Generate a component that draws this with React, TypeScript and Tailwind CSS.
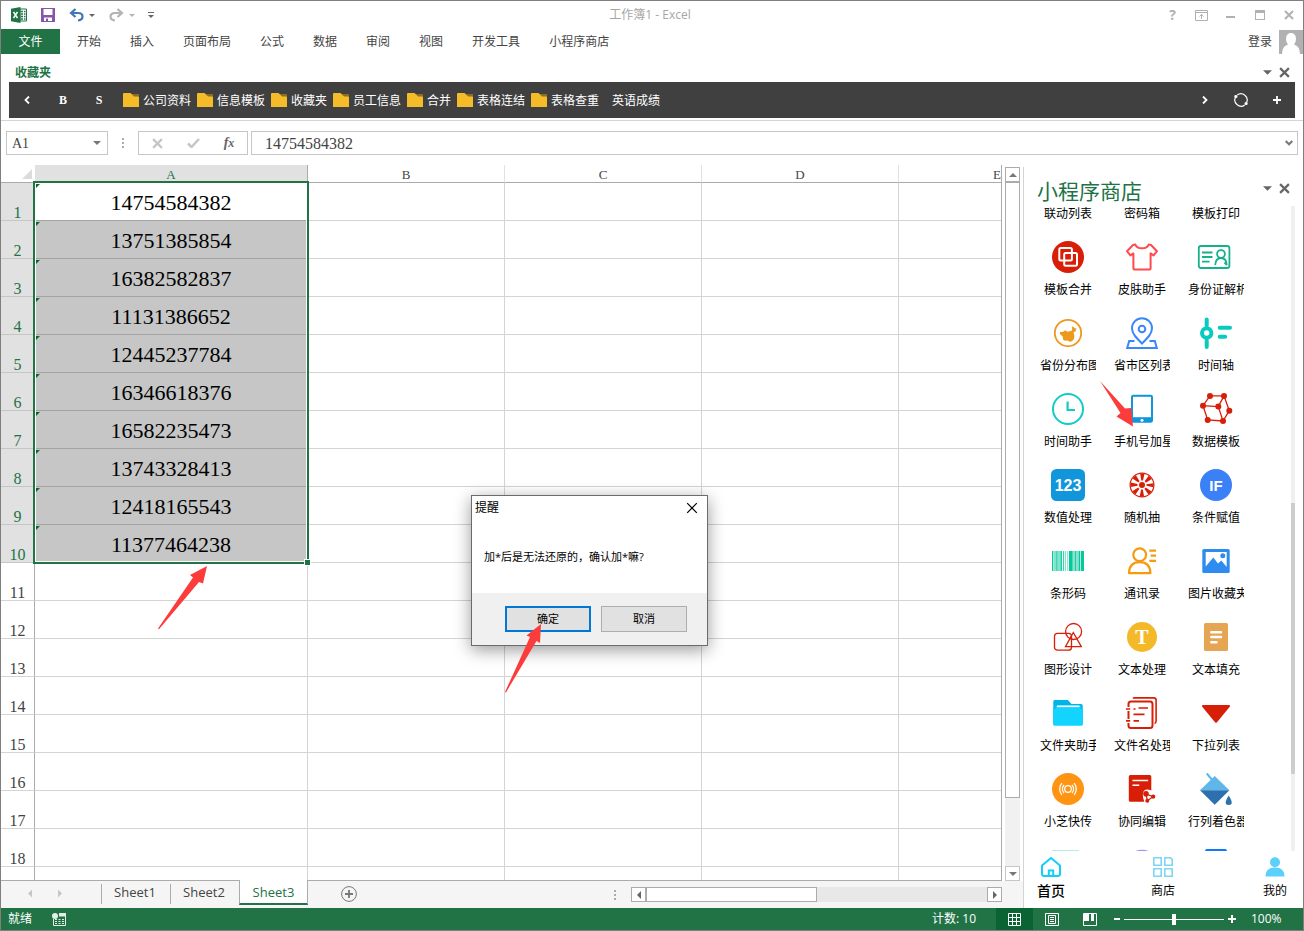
import { useState, type ReactNode } from "react";

const ribbonTabs = ["开始", "插入", "页面布局", "公式", "数据", "审阅", "视图", "开发工具", "小程序商店"];

const favorites = ["公司资料", "信息模板", "收藏夹", "员工信息", "合并", "表格连结", "表格查重"];

const phones = [
  "14754584382",
  "13751385854",
  "16382582837",
  "11131386652",
  "12445237784",
  "16346618376",
  "16582235473",
  "13743328413",
  "12418165543",
  "11377464238",
];

const rows = Array.from({ length: 18 }, (_, i) => i + 1);
const otherColumns = ["B", "C", "D", "E"];
const sheets = ["Sheet1", "Sheet2", "Sheet3"];

const apps: { name: string; icon: ReactNode }[] = [
  {
    name: "模板合并",
    icon: (
      <>
        <circle cx="16" cy="16" r="16" fill="#d81e06" />
        <g fill="none" stroke="#fff" strokeWidth="2">
          <rect x="7.3" y="7" width="12.6" height="12.6" rx="1.5" />
          <rect x="12.2" y="12" width="12.8" height="12.8" rx="1.5" />
        </g>
      </>
    ),
  },
  {
    name: "皮肤助手",
    icon: (
      <path
        d="M9.3 3.5C11 8.6 21 8.6 22.7 3.5L25 4l6 6.2-3.4 4.2-3-2V27q0 1.6-1.6 1.6H9Q7.4 28.6 7.4 27V12.4l-3 2L1 10.2 7 4z"
        fill="none"
        stroke="#ff4a4e"
        strokeWidth="2"
        strokeLinejoin="round"
      />
    ),
  },
  {
    name: "身份证解析",
    icon: (
      <g fill="none" stroke="#16b08c" strokeWidth="1.8">
        <rect x="-1.2" y="5" width="30.6" height="22" rx="2.2" />
        <path d="M2 11.5h10.5M2 16h10.5M2 20.6h7.5" />
        <circle cx="21" cy="13" r="3.9" />
        <path d="M15.2 24c.3-4.6 2.5-7 5.8-7s5.5 2.4 5.8 7M24.5 21.5l2.5 2.5" />
      </g>
    ),
  },
  {
    name: "省份分布图",
    icon: (
      <>
        <circle cx="16" cy="16" r="13.2" fill="none" stroke="#ed9a1c" strokeWidth="1.8" />
        <path
          d="M8 15l3.5-.2 1.5-1.6 2.5 1.6 4-1 .8-1.6-.6-1.8 1.3-1.2 1.5 2 2 .4-1 2.6-2 1.2.8 2.4-.1 4-2.2 2.4-2.5.6-2-1.3-2.5.3-2-1.2-.3-3L8 17z"
          fill="#ed9a1c"
        />
      </>
    ),
  },
  {
    name: "省市区列表",
    icon: (
      <g fill="none" stroke="#3a86fb" strokeWidth="2">
        <path d="M16 26.5C10 20.5 6 16.5 6 11.2a10 10 0 0 1 20 0C26 16.5 22 20.5 16 26.500z" />
        <circle cx="16" cy="12" r="3.3" />
        <path d="M8.500 24H3.200L1.200 31h29.600l-2-7h-5.300" />
      </g>
    ),
  },
  {
    name: "时间轴",
    icon: (
      <g fill="none" stroke="#08cbc0" strokeWidth="4" strokeLinecap="round">
        <path d="M6.700 2.500v6M6.700 23.500V30M19.700 10.700h10.300M19.700 19.800h5.500" />
        <circle cx="6.700" cy="16" r="4.700" />
      </g>
    ),
  },
  {
    name: "时间助手",
    icon: (
      <g fill="none" stroke="#12cbc8" strokeWidth="2">
        <circle cx="16" cy="16" r="15" />
        <path d="M15.600 8.500v8.500H23" strokeWidth="2.200" />
      </g>
    ),
  },
  {
    name: "手机号加星",
    icon: (
      <>
        <rect x="5" y="1.800" width="22" height="28" rx="2.200" fill="#1296db" />
        <path d="M7 3.800h18v20.400H7z" fill="#fff" />
        <circle cx="16" cy="27.200" r="1.500" fill="#fff" />
      </>
    ),
  },
  {
    name: "数据模板",
    icon: (
      <>
        <path
          d="M10 2.900h14M10 2.900L3 12.700l15.300.9L24 2.900l5.300 14.800L23 28l-4.700-14.400M3 12.700L7.700 27 23 28"
          fill="none"
          stroke="#d81e06"
          strokeWidth="1.300"
        />
        <g fill="#d81e06">
          <circle cx="10" cy="2.900" r="3" />
          <circle cx="24" cy="2.900" r="3" />
          <circle cx="3" cy="12.700" r="3" />
          <circle cx="18.300" cy="13.600" r="3" />
          <circle cx="29.300" cy="17.700" r="3" />
          <circle cx="7.700" cy="27" r="3" />
          <circle cx="23" cy="28" r="3" />
        </g>
      </>
    ),
  },
  {
    name: "数值处理",
    icon: (
      <>
        <rect x="-1" y="0" width="34" height="32" rx="5.500" fill="#1296db" />
        <text x="16" y="22" textAnchor="middle" fontSize="16" fontWeight="700" fill="#fff" fontFamily="Liberation Sans, sans-serif">
          123
        </text>
      </>
    ),
  },
  {
    name: "随机抽",
    icon: (
      <g fill="none" stroke="#d81e06">
        <circle cx="16" cy="16" r="11.900" strokeWidth="1.200" />
        <circle cx="16" cy="16" r="8" strokeWidth="7" strokeDasharray="3.100 3.183" strokeDashoffset="1.550" />
        <circle cx="16" cy="16" r="3" fill="#d81e06" stroke="none" />
      </g>
    ),
  },
  {
    name: "条件赋值",
    icon: (
      <>
        <circle cx="16" cy="16" r="16" fill="#3a80f6" />
        <text x="16" y="21.500" textAnchor="middle" fontSize="15" fontWeight="700" fill="#fff" fontFamily="Liberation Sans, sans-serif">
          IF
        </text>
      </>
    ),
  },
  {
    name: "条形码",
    icon: (
      <>
        <path d="M2 6h7v20H2zM13 6h1v20h-1zM15.200 6h1v20h-1zM20.500 6h6v20h-6z" fill="#85e3cb" />
        <path
          d="M0 6h1.400v20H0zM4.500 6h.7v20h-.7zM8.700 6h1.200v20H8.700zM11.200 6h.9v20h-.9zM17 6h3.600v20H17zM23 6h.8v20H23zM26.600 6H28v20h-1.400zM28.700 6H32v20h-3.300z"
          fill="#05c99c"
        />
      </>
    ),
  },
  {
    name: "通讯录",
    icon: (
      <g fill="none" stroke="#f59c0e" strokeWidth="2.200">
        <circle cx="13.700" cy="9.800" r="6.400" />
        <path d="M3 28.200c.2-7 4-11 10.700-11s10.500 4 10.700 11z" strokeLinejoin="round" />
        <path d="M23.300 5.700H30M24.700 10.700H30M23.300 15.800H30" />
      </g>
    ),
  },
  {
    name: "图片收藏夹",
    icon: (
      <>
        <rect x="2.300" y="4" width="27.400" height="24" rx="1.500" fill="#2e8cf0" />
        <path d="M5.700 7h21v15l-5.400-6.500-3.300 3-4.700-6L5.700 21.500z" fill="#fff" />
        <circle cx="22.800" cy="10.700" r="2.500" fill="#2e8cf0" />
      </>
    ),
  },
  {
    name: "图形设计",
    icon: (
      <g fill="none" stroke="#d81e06" strokeWidth="1.300">
        <circle cx="21.600" cy="10.500" r="8" />
        <rect x="2.500" y="12.400" width="17" height="16.800" rx="3" />
        <path d="M21.300 11.500l8 14.200H13.500z" />
      </g>
    ),
  },
  {
    name: "文本处理",
    icon: (
      <>
        <circle cx="16" cy="16" r="15" fill="#f3b929" />
        <text x="16" y="22.700" textAnchor="middle" fontSize="20" fontWeight="700" fill="#fff" fontFamily="Liberation Serif, serif">
          T
        </text>
      </>
    ),
  },
  {
    name: "文本填充",
    icon: (
      <>
        <rect x="4" y="2" width="24" height="28" rx="1.500" fill="#e6a552" />
        <path d="M11.300 11.200h9.700M11.300 16h9.700M11.300 21.200h5.200" stroke="#fff" strokeWidth="2.400" strokeLinecap="round" />
      </>
    ),
  },
  {
    name: "文件夹助手",
    icon: (
      <>
        <path d="M1.300 4.500Q1.300 3 2.800 3h13l3.700 4H29q1.700 0 1.700 1.700V14H1.300z" fill="#00b4e6" />
        <path d="M1 12h2.500V8.500h25.200V12H31v15q0 1.700-1.700 1.700H2.700Q1 28.700 1 27z" fill="#12d4ff" />
        <path d="M5 9.300h22.500" stroke="#fff" strokeWidth="1.600" />
      </>
    ),
  },
  {
    name: "文件名处理",
    icon: (
      <g fill="none" stroke="#d81e06" strokeWidth="2">
        <path d="M7 1.500Q7.500.9 8.500.9h19.300q2.300 0 2.300 2.300V24q0 2-1.600 2.500" strokeWidth="1.600" />
        <path d="M2.500 10V7q0-2.500 2.500-2.500h19q2.500 0 2.500 2.500v21.500q0 2.500-2.500 2.500H5q-2.500 0-2.500-2.500V26M2.500 14v8" />
        <path d="M0 12h4.200M0 23.900h4.200M12.500 11h9.500M7.500 17.300h11M7.500 23.900H13M7.500 12h2" strokeWidth="1.700" />
      </g>
    ),
  },
  {
    name: "下拉列表",
    icon: <path d="M3 9.100h26L16 24.800z" fill="#d81e06" stroke="#d81e06" strokeWidth="2" strokeLinejoin="round" />,
  },
  {
    name: "小芝快传",
    icon: (
      <>
        <circle cx="16" cy="16" r="16" fill="#ff9413" />
        <g fill="none" stroke="#fff" strokeWidth="1.200">
          <circle cx="16" cy="16" r="3.300" />
          <path d="M12 11.800q-3.200 4.200 0 8.400M20 11.800q3.200 4.200 0 8.400M9.800 10.200q-4.200 5.800 0 11.600M22.200 10.200q4.200 5.800 0 11.600" />
        </g>
      </>
    ),
  },
  {
    name: "协同编辑",
    icon: (
      <>
        <path d="M2.800 3.500Q2.800 2 4.300 2h19.500q1.500 0 1.500 1.500v14q-8-3-8.500 4 0 4 1.500 7.200h-14q-1.500 0-1.500-1.500z" fill="#d81e06" />
        <path d="M6.500 7.600h15.600M6.500 12.300h6.800" stroke="#fff" strokeWidth="1.500" />
        <g fill="#d81e06">
          <path d="M20 21l7 2.700-5.700 4z" fill="none" stroke="#d81e06" strokeWidth="1.200" />
          <circle cx="20" cy="20.800" r="2.800" />
          <circle cx="27.200" cy="23.700" r="2.100" />
          <circle cx="21.300" cy="27.800" r="2" />
        </g>
      </>
    ),
  },
  {
    name: "行列着色器",
    icon: (
      <>
        <path d="M6.800.5l5 6" fill="none" stroke="#5fb6ea" strokeWidth="2" />
        <path d="M14.700 3L29.400 17.300H0z" fill="#5fb6ea" />
        <path d="M0 17.300h29.400L14.700 31.700z" fill="#2c70ad" />
        <path d="M28.700 22.500q6 9.500 0 9.500t0-9.500z" fill="#2c70ad" />
      </>
    ),
  },
];

// Tops of the icons in the row that is still scrolled away
const nextIcons: ReactNode[] = [
  <rect x="0" y="1" width="27" height="28" fill="#b5ecec" />,
  <circle cx="16" cy="16.700" r="16" fill="#9d90f6" />,
  <rect x="5" y="0" width="22" height="30" rx="2" fill="#0a7bff" />,
];

function Cross({ className }: { className: string }) {
  return (
    <svg viewBox="0 0 10 10" className={className} fill="none" stroke="currentColor">
      <path d="M1 1l8 8M9 1l-8 8" />
    </svg>
  );
}

function Caret({ className }: { className: string }) {
  return (
    <svg viewBox="0 0 8 4" className={className} fill="currentColor">
      <path d="M0 0h8L4 4z" />
    </svg>
  );
}

function PaneButtons() {
  return (
    <div className="flex items-center gap-[7px] text-[#666]">
      <button aria-label="窗格选项">
        <Caret className="h-[5px] w-[9px]" />
      </button>
      <button aria-label="关闭窗格">
        <Cross className="size-[11px] stroke-2" />
      </button>
    </div>
  );
}

function TitleBar() {
  return (
    <header className="relative flex h-7 shrink-0 items-center justify-between">
      <div className="flex items-center pl-[10px] text-[#666]">
        <svg viewBox="0 0 16 16" className="size-4">
          <path d="M9 2h6.500v12H9z" fill="#fff" stroke="#217346" />
          <path d="M10 4.500h2M13 4.500h1.500M10 7h2M13 7h1.500M10 9.500h2M13 9.500h1.500M10 12h2M13 12h1.500" stroke="#217346" strokeWidth="1.400" />
          <path d="M0 1.800L9.500 0v16L0 14.200z" fill="#217346" />
          <path d="M2.500 5l4 6M6.500 5l-4 6" stroke="#fff" strokeWidth="1.500" />
        </svg>
        <button aria-label="保存" className="ml-[14px]">
          <svg viewBox="0 0 14 14" className="size-[14px]">
            <path d="M0 0h14v14H0z" fill="#8455ab" />
            <path d="M2.500 1h9v6h-9zM3 9.500h8V13H3z" fill="#fff" />
            <path d="M5 10.500h2V13H5z" fill="#8455ab" />
          </svg>
        </button>
        <button aria-label="撤消" className="ml-[14px] flex items-center gap-[5px]">
          <svg viewBox="0 0 15 14" className="h-[14px] w-[15px]" fill="none" stroke="#3f78b5" strokeWidth="2.200">
            <path d="M6.500 1L2 5l4.500 4M2.500 5H9c6 0 6 7 0 7.500" />
          </svg>
          <Caret className="h-[3px] w-[6px]" />
        </button>
        <button aria-label="恢复" className="ml-[14px] flex items-center gap-[5px] text-[#b4b4b4]">
          <svg viewBox="0 0 15 14" className="h-[14px] w-[15px]" fill="none" stroke="#b4b4b4" strokeWidth="2.200">
            <path d="M8.500 1L13 5 8.500 9M12.500 5H6c-6 0-6 7 0 7.500" />
          </svg>
          <Caret className="h-[3px] w-[6px]" />
        </button>
        <button aria-label="自定义快速访问工具栏" className="ml-[13px] flex flex-col items-center gap-[2px]">
          <span className="h-px w-[6px] bg-[#666]" />
          <Caret className="h-[3px] w-[6px]" />
        </button>
      </div>
      <h1 className="absolute inset-x-0 pr-1 text-center text-[12px] leading-4 text-[#a6a6a6]">工作簿1 - Excel</h1>
      <div className="relative flex items-center text-[#b1b1b1]">
        <button aria-label="帮助" className="w-[29px] text-[14px] leading-4 font-bold">
          ?
        </button>
        <button aria-label="功能区显示选项" className="flex w-[29px] justify-center">
          <svg viewBox="0 0 13 11" className="h-[11px] w-[13px]" fill="none" stroke="currentColor">
            <path d="M.5.5h12v10H.5zM.5 2.500h12M6.500 9V4.500M4.500 6.500l2-2 2 2" />
          </svg>
        </button>
        <button aria-label="最小化" className="flex w-[29px] justify-center pt-1">
          <span className="h-[2px] w-[9px] bg-[#b1b1b1]" />
        </button>
        <button aria-label="最大化" className="flex w-[29px] justify-center">
          <span className="h-[10px] w-[10px] border border-t-[3px] border-[#b1b1b1]" />
        </button>
        <button aria-label="关闭" className="flex w-[29px] justify-center">
          <Cross className="size-[10px] stroke-2" />
        </button>
      </div>
    </header>
  );
}

function Ribbon() {
  return (
    <nav className="flex h-[25px] shrink-0 items-center text-[12px] leading-4 text-[#444]">
      <button className="h-full w-[59px] bg-[#217346] text-white">文件</button>
      <div className="flex flex-1 gap-[29px] pl-[17px]">
        {ribbonTabs.map((tab) => (
          <button key={tab}>{tab}</button>
        ))}
      </div>
      <button className="flex h-full items-center gap-[7px]">
        登录
        <svg viewBox="0 0 24 24" className="size-6">
          <path d="M0 0h24v24H0z" fill="#b1b1b1" />
          <path d="M3 24q0-8 6-9.500-2-2-2-6Q7.500 3 12 3t5 5.500q0 4-2 6 6 1.500 6 9.500z" fill="#fff" />
        </svg>
      </button>
    </nav>
  );
}

function FavoritesPane() {
  return (
    <section className="shrink-0 border-b border-[#d4d4d4] px-2 pb-[2px]">
      <div className="flex h-7 items-center justify-between pt-2 pr-[5px] pl-[6px]">
        <h2 className="pt-px text-[12px] leading-4 font-semibold text-[#217346]">收藏夹</h2>
        <PaneButtons />
      </div>
      <div className="flex h-9 items-center bg-[#404040] text-[12px] leading-4 text-white">
        <button aria-label="向前" className="flex w-9 justify-center">
          <svg viewBox="0 0 6 8" className="h-2 w-[6px]" fill="none" stroke="currentColor" strokeWidth="1.800">
            <path d="M5 .5L1.500 4 5 7.500" />
          </svg>
        </button>
        <button className="w-9 font-['Liberation_Serif',serif] font-bold">B</button>
        <button className="w-9 font-['Liberation_Serif',serif] font-bold">S</button>
        <div className="flex flex-1 gap-[6px] pl-[6px]">
          {favorites.map((name) => (
            <button key={name} className="flex items-center gap-1">
              <svg viewBox="0 0 16 14" className="h-[14px] w-4">
                <path d="M8 1h8v5H8z" fill="#8d6f22" />
                <path d="M0 1q0-1 1-1h6.500L11 3.500h4q1 0 1 1V14H0z" fill="#f5bc29" />
              </svg>
              <span className="pt-[2px]">{name}</span>
            </button>
          ))}
          <button className="px-[7px] pt-[2px]">英语成绩</button>
        </div>
        <button aria-label="向后" className="flex w-9 justify-center">
          <svg viewBox="0 0 6 8" className="h-2 w-[6px]" fill="none" stroke="currentColor" strokeWidth="1.800">
            <path d="M1 .5L4.500 4 1 7.500" />
          </svg>
        </button>
        <button aria-label="刷新" className="flex w-9 justify-center">
          <svg viewBox="0 0 14 14" className="size-[14px]" fill="none" stroke="currentColor" strokeWidth="1.200">
            <path d="M3.200 2.100A6.200 6.200 0 0 1 12.600 9.600M10.800 11.900A6.200 6.200 0 0 1 1.400 4.400" />
            <circle cx="1.900" cy="3.500" r="1" fill="currentColor" />
            <circle cx="12.100" cy="10.500" r="1" fill="currentColor" />
          </svg>
        </button>
        <button aria-label="添加" className="flex w-9 justify-center">
          <svg viewBox="0 0 8 8" className="size-2" fill="none" stroke="currentColor" strokeWidth="1.800">
            <path d="M4 0v8M0 4h8" />
          </svg>
        </button>
      </div>
    </section>
  );
}

function FormulaBar() {
  const [formula, setFormula] = useState(phones[0]);

  return (
    <div className="flex shrink-0 items-center px-[5px] py-[10px] text-[#777]">
      <div className="flex h-6 w-[102px] items-center border border-[#c6c6c6] pr-[6px]">
        <input
          aria-label="名称框"
          defaultValue="A1"
          className="w-full min-w-0 pt-[2px] pl-[5px] font-['Liberation_Serif',serif] text-[14px] leading-4 text-[#444] outline-none"
        />
        <button aria-label="名称列表">
          <Caret className="h-1 w-2" />
        </button>
      </div>
      <div className="flex w-[30px] flex-col items-center gap-[2px]">
        <span className="size-[2px] bg-[#ababab]" />
        <span className="size-[2px] bg-[#ababab]" />
        <span className="size-[2px] bg-[#ababab]" />
      </div>
      <div className="mr-[3px] flex h-6 w-[110px] items-center border border-[#c6c6c6]">
        <button aria-label="取消输入" className="flex flex-1 justify-center text-[#c6c6c6]">
          <Cross className="size-[11px] stroke-2" />
        </button>
        <button aria-label="输入" className="flex flex-1 justify-center text-[#c6c6c6]">
          <svg viewBox="0 0 13 10" className="h-[10px] w-[13px]" fill="none" stroke="currentColor" strokeWidth="2.500">
            <path d="M1 5.500L4.500 9 12 1" />
          </svg>
        </button>
        <button
          aria-label="插入函数"
          className="flex-1 font-['Liberation_Serif',serif] text-[14px] leading-4 font-bold text-[#666] italic"
        >
          f<span className="text-[12px]">x</span>
        </button>
      </div>
      <div className="flex h-6 flex-1 items-center border border-[#c6c6c6] pr-1">
        <input
          aria-label="编辑栏"
          value={formula}
          onChange={(e) => setFormula(e.target.value)}
          className="w-full min-w-0 pt-[2px] pl-[13px] font-['Liberation_Serif',serif] text-[16px] leading-5 text-[#444] outline-none"
        />
        <button aria-label="展开编辑栏">
          <svg viewBox="0 0 8 6" className="h-[6px] w-2" fill="none" stroke="currentColor" strokeWidth="2">
            <path d="M.7 1L4 4.300 7.300 1" />
          </svg>
        </button>
      </div>
    </div>
  );
}

function Grid() {
  return (
    <div className="relative min-w-0 flex-1 overflow-hidden border-r border-b border-[#ababab]">
      <table className="w-[1095px] table-fixed border-separate border-spacing-0 font-['Liberation_Serif',serif] text-[#444]">
        <colgroup>
          <col className="w-[34px]" />
          <col className="w-[273px]" />
          {otherColumns.map((col) => (
            <col key={col} className="w-[197px]" />
          ))}
        </colgroup>
        <thead>
          <tr className="h-[18px] text-[13px] leading-[15px]">
            <th className="border-b border-[#ababab] p-0">
              <div className="flex justify-end pr-[3px]">
                <svg viewBox="0 0 10 10" className="size-[10px]">
                  <path d="M10 0v10H0z" fill="#dcdcdc" />
                </svg>
              </div>
            </th>
            <th className="border-r border-b border-[#ababab] bg-[#e1e1e1] p-0 pt-[2px] font-normal text-[#217346]">A</th>
            {otherColumns.map((col) => (
              <th key={col} className="border-r border-b border-r-[#e1e1e1] border-b-[#ababab] p-0 pt-[2px] font-normal">
                {col}
              </th>
            ))}
          </tr>
        </thead>
        <tbody>
          {rows.map((row) => {
            const phone = phones[row - 1];
            return (
              <tr key={row} className="h-[38px]">
                <th
                  className={
                    phone
                      ? "border-r border-b border-r-[#ababab] border-b-[#c6c6c6] bg-[#e1e1e1] p-0 align-bottom text-[16px] leading-[14px] font-normal text-[#217346]"
                      : "border-r border-b border-r-[#ababab] border-b-[#d4d4d4] p-0 align-bottom text-[16px] leading-[14px] font-normal"
                  }
                >
                  {row}
                </th>
                {phone ? (
                  <td
                    className={
                      row === 1
                        ? "relative border-r border-b border-[#a3a3a3] p-0 pt-[2px] text-center text-[22px] leading-6 text-black"
                        : "relative border-r border-b border-[#a3a3a3] bg-[#c6c6c6] p-0 pt-[2px] text-center text-[22px] leading-6 text-black"
                    }
                  >
                    {phone}
                    <span className="absolute top-px left-px border-t-4 border-r-4 border-t-[#0a6b1c] border-r-transparent" />
                  </td>
                ) : (
                  <td className="border-r border-b border-[#d4d4d4] p-0" />
                )}
                {otherColumns.map((col) => (
                  <td key={col} className="border-r border-b border-[#d4d4d4] p-0" />
                ))}
              </tr>
            );
          })}
          <tr className="h-[38px]">
            <th className="border-r border-[#ababab] p-0" />
            <td className="border-r border-[#d4d4d4] p-0" />
            {otherColumns.map((col) => (
              <td key={col} className="border-r border-[#d4d4d4] p-0" />
            ))}
          </tr>
        </tbody>
      </table>
      {/* Selection frame */}
      <div className="pointer-events-none absolute top-4 left-8 h-[383px] w-[276px] border-2 border-[#217346] shadow-[inset_0_0_0_1px_#fff]">
        <span className="absolute -right-[4px] -bottom-[4px] size-[7px] border border-white bg-[#217346]" />
      </div>
    </div>
  );
}

function VerticalScroll() {
  return (
    <div className="flex w-[21px] flex-col px-[3px] pt-[2px]">
      <button aria-label="向上滚动" className="flex h-[15px] w-[15px] items-center justify-center border border-[#ababab] text-[#777]">
        <Caret className="h-1 w-2 rotate-180" />
      </button>
      <div className="flex-1 bg-[#f1f1f1]">
        <div className="h-[90%] border border-[#ababab] bg-white" />
      </div>
      <button aria-label="向下滚动" className="flex h-[15px] w-[15px] items-center justify-center border border-[#c6c6c6] text-[#777]">
        <Caret className="h-1 w-2" />
      </button>
    </div>
  );
}

function SheetBar() {
  const [active, setActive] = useState("Sheet3");

  return (
    <div className="flex h-[27px] shrink-0 items-start bg-[#f5f5f5]">
      <div className="flex h-[25px] w-[100px] items-center gap-[22px] pl-[25px] text-[#c6c6c6]">
        <button aria-label="上一张工作表">
          <Caret className="h-[5px] w-[8px] rotate-90" />
        </button>
        <button aria-label="下一张工作表">
          <Caret className="h-[5px] w-[8px] -rotate-90" />
        </button>
      </div>
      {sheets.map((sheet) => (
        <button
          key={sheet}
          onClick={() => setActive(sheet)}
          className={
            sheet === active
              ? "relative -mt-px h-[25px] w-[69px] border-r border-b-2 border-l border-r-[#ababab] border-b-[#217346] border-l-[#ababab] bg-white text-[13px] leading-4 text-[#217346]"
              : "mt-[3px] h-5 w-[69px] border-l border-[#ababab] pr-[2px] pb-1 text-[13px] leading-4 text-[#444]"
          }
        >
          {sheet}
        </button>
      ))}
      <button aria-label="新工作表" className="mt-[5px] ml-[33px]">
        <svg viewBox="0 0 16 16" className="size-4" fill="none" stroke="#777">
          <circle cx="8" cy="8" r="7.400" />
          <path d="M8 4v8M4 8h8" strokeWidth="1.800" />
        </svg>
      </button>
      <div className="mt-[6px] mr-[21px] ml-auto flex w-[388px] items-center">
        <div className="flex w-[17px] flex-col gap-[2px]">
          <span className="size-[2px] bg-[#ababab]" />
          <span className="size-[2px] bg-[#ababab]" />
          <span className="size-[2px] bg-[#ababab]" />
        </div>
        <button aria-label="向左滚动" className="flex h-[15px] w-[15px] items-center justify-center border border-[#ababab] bg-white text-[#666]">
          <Caret className="h-1 w-2 rotate-90" />
        </button>
        <div className="h-[15px] flex-1 bg-[#e8e8e8]">
          <div className="h-full w-1/2 border border-[#ababab] bg-white" />
        </div>
        <button aria-label="向右滚动" className="flex h-[15px] w-[15px] items-center justify-center border border-[#ababab] bg-white text-[#666]">
          <Caret className="h-1 w-2 -rotate-90" />
        </button>
      </div>
    </div>
  );
}

function AppLabel({ children }: { children: ReactNode }) {
  return <span className="h-4 w-14 overflow-hidden text-center whitespace-nowrap">{children}</span>;
}

function StorePane() {
  return (
    <aside className="flex w-[280px] shrink-0 flex-col pt-[2px]">
      <div className="flex flex-1 flex-col overflow-hidden border-l border-[#d4d4d4]">
        <div className="flex h-[39px] shrink-0 items-start justify-between px-[13px] pt-3">
          <h2 className="text-[21px] leading-6 text-[#217346]">小程序商店</h2>
          <div className="pt-1">
            <PaneButtons />
          </div>
        </div>
        <div className="flex min-h-0 flex-1 justify-between pr-[8px] pl-[7px] text-[12px] leading-4 text-black">
          <div className="grid w-[222px] grid-cols-3 content-start gap-y-[19px] overflow-hidden">
            {["联动列表", "密码箱", "模板打印"].map((name) => (
              <button key={name} className="flex flex-col items-center">
                <AppLabel>{name}</AppLabel>
              </button>
            ))}
            {apps.map(({ name, icon }) => (
              <button key={name} className="relative flex flex-col items-center gap-[9px]">
                <svg viewBox="0 0 32 32" className="size-8 overflow-visible">
                  {icon}
                </svg>
                <AppLabel>{name}</AppLabel>
                {name === "手机号加星" && (
                  <svg viewBox="0 0 34 46" className="pointer-events-none absolute -top-3 -left-[5px] h-[46px] w-[34px]">
                    <path d="M0 0L25 27.500l6-.5 2 18.500L16.500 35.500l4-3.500z" fill="#fc3b3b" />
                  </svg>
                )}
              </button>
            ))}
            {nextIcons.map((icon, i) => (
              <svg key={i} viewBox="0 0 32 32" className="size-8 justify-self-center">
                {icon}
              </svg>
            ))}
          </div>
          <div className="flex w-1 flex-col bg-[#f0f0f0]">
            <div className="h-[46%]" />
            <div className="h-[42%] bg-[#cdcdcd]" />
          </div>
        </div>
        <div className="flex h-[57px] shrink-0 justify-between pt-[6px] pr-[14px] pl-[13px] text-[12px] leading-5 text-black">
          <button className="flex w-7 flex-col items-center gap-1 text-[14px] font-medium whitespace-nowrap">
            <svg viewBox="0 0 20 20" className="size-5 shrink-0" fill="none" stroke="#12cffa" strokeWidth="2">
              <path d="M1 8.500L10 1l9 7.500V17q0 2-2 2H3q-2 0-2-2z" strokeLinejoin="round" />
              <path d="M7.800 19v-5.500h4.400V19" />
            </svg>
            首页
          </button>
          <button className="flex w-7 flex-col items-center gap-1 whitespace-nowrap">
            <svg viewBox="0 0 20 20" className="size-5 shrink-0" fill="none" stroke="#7fd5f5" strokeWidth="1.600">
              <path d="M.8.8h7.400v7.400H.8zM11.800.8h5.700l1.700 1.500v5.900h-7.400zM.8 11.800h7.400v7.400H.8zM11.800 11.800h7.400v7.400h-7.400z" />
            </svg>
            商店
          </button>
          <button className="flex w-7 flex-col items-center gap-1 whitespace-nowrap">
            <svg viewBox="0 0 20 20" className="size-5 shrink-0" fill="#5ad0fa">
              <circle cx="10" cy="5.300" r="5" />
              <path d="M.5 19.500q0-9 9.500-9t9.500 9z" />
            </svg>
            我的
          </button>
        </div>
      </div>
    </aside>
  );
}

function StatusBar() {
  return (
    <footer className="flex h-[22px] shrink-0 items-center bg-[#217346] text-[12px] leading-4 text-white">
      <span className="pl-[7px]">就绪</span>
      <button aria-label="录制宏" className="ml-5">
        <svg viewBox="0 0 14 13" className="h-[13px] w-[14px]">
          <path d="M1.500 6v6.500h12V1H7" fill="none" stroke="#e3eee8" />
          <path d="M7 0h7v3.500H7z" fill="#e3eee8" />
          <path d="M3 6.500h2M6.500 6.500h2M10 6.500h2M3 8.500h2M6.500 8.500h2M10 8.500h2M3 10.500h2M6.500 10.500h2M10 10.500h2" stroke="#e3eee8" />
          <circle cx="3" cy="3" r="3" fill="#e3eee8" />
        </svg>
      </button>
      <span className="mr-5 ml-auto">计数: 10</span>
      <button aria-label="普通" className="flex h-full w-[37px] items-center justify-center bg-[#0a6332]">
        <svg viewBox="0 0 13 13" className="size-[13px]" fill="none" stroke="#fff">
          <path d="M.5.5h12v12H.5zM4.500.5v12M8.500.5v12M.5 4.500h12M.5 8.500h12" />
        </svg>
      </button>
      <button aria-label="页面布局视图" className="flex w-[38px] justify-center">
        <svg viewBox="0 0 14 13" className="h-[13px] w-[14px]" fill="none" stroke="#fff">
          <path d="M.5.5h13v12H.5zM3.500 2.500h7v8h-7zM5 4.500h4M5 6.500h4M5 8.500h4" />
        </svg>
      </button>
      <button aria-label="分页预览" className="flex w-[38px] justify-center">
        <svg viewBox="0 0 14 13" className="h-[13px] w-[14px]">
          <path d="M.5.5h13v12H.5z" fill="none" stroke="#fff" />
          <path d="M1 1h5v7H1zM8 1h3v7H8z" fill="#fff" />
        </svg>
      </button>
      <button aria-label="缩小" className="ml-[5px] h-[2px] w-[6px] bg-white" />
      <input
        type="range"
        aria-label="显示比例"
        min={0}
        max={100}
        defaultValue={50}
        className="mx-1 h-3 w-[100px] appearance-none bg-[linear-gradient(#fff,#fff)] bg-[length:100%_1px] bg-center bg-no-repeat [&::-webkit-slider-thumb]:h-[11px] [&::-webkit-slider-thumb]:w-1 [&::-webkit-slider-thumb]:appearance-none [&::-webkit-slider-thumb]:bg-white"
      />
      <button aria-label="放大">
        <svg viewBox="0 0 8 8" className="size-2" fill="none" stroke="#fff" strokeWidth="2">
          <path d="M4 0v8M0 4h8" />
        </svg>
      </button>
      <button className="ml-[15px] w-[52px] text-left">100%</button>
    </footer>
  );
}

function ConfirmDialog() {
  return (
    <div
      role="dialog"
      aria-label="提醒"
      className="absolute top-[494px] left-[470px] w-[237px] border border-[#6b6b6b] bg-white text-[11px] leading-4 text-black shadow-[0_4px_16px_rgba(0,0,0,0.4)]"
    >
      <div className="flex h-6 items-center justify-between pr-[9px] pl-[3px]">
        <span className="text-[12px]">提醒</span>
        <button aria-label="关闭对话框">
          <Cross className="size-3" />
        </button>
      </div>
      <p className="px-3 pt-[29px] pb-7">加*后是无法还原的，确认加*嘛?</p>
      <div className="flex justify-end gap-[10px] bg-[#f0f0f0] px-5 py-[13px]">
        <button className="h-[26px] w-[86px] border-2 border-[#0078d7] bg-[#e1e1e1]">确定</button>
        <button className="h-[26px] w-[86px] border border-[#adadad] bg-[#e1e1e1]">取消</button>
      </div>
    </div>
  );
}

export default function App() {
  return (
    <div className="relative flex h-screen flex-col overflow-hidden border border-[#7f7f7f] bg-white font-['Open_Sans','Noto_Sans_CJK_SC',sans-serif]">
      <TitleBar />
      <Ribbon />
      <FavoritesPane />
      <FormulaBar />
      <main className="flex min-h-0 flex-1">
        <div className="flex min-w-0 flex-1 flex-col">
          <div className="flex min-h-0 flex-1">
            <Grid />
            <VerticalScroll />
          </div>
          <SheetBar />
        </div>
        <StorePane />
      </main>
      <StatusBar />
      <ConfirmDialog />
      {/* Guide arrows */}
      <svg viewBox="0 0 50 64" className="pointer-events-none absolute top-[565px] left-[157px] h-16 w-[50px]" fill="#fc3b3b">
        <path d="M49 0L32 9l3 2.500L0 62.500l1 .8L41 16l4 1.500z" />
      </svg>
      <svg viewBox="0 0 37 69" className="pointer-events-none absolute top-[623px] left-[504px] h-[69px] w-[37px]" fill="#fc3b3b">
        <path d="M36 0L21.500 11.500l3.500 1.500L0 68l1 .5L31.500 17l3.500 2z" />
      </svg>
    </div>
  );
}
